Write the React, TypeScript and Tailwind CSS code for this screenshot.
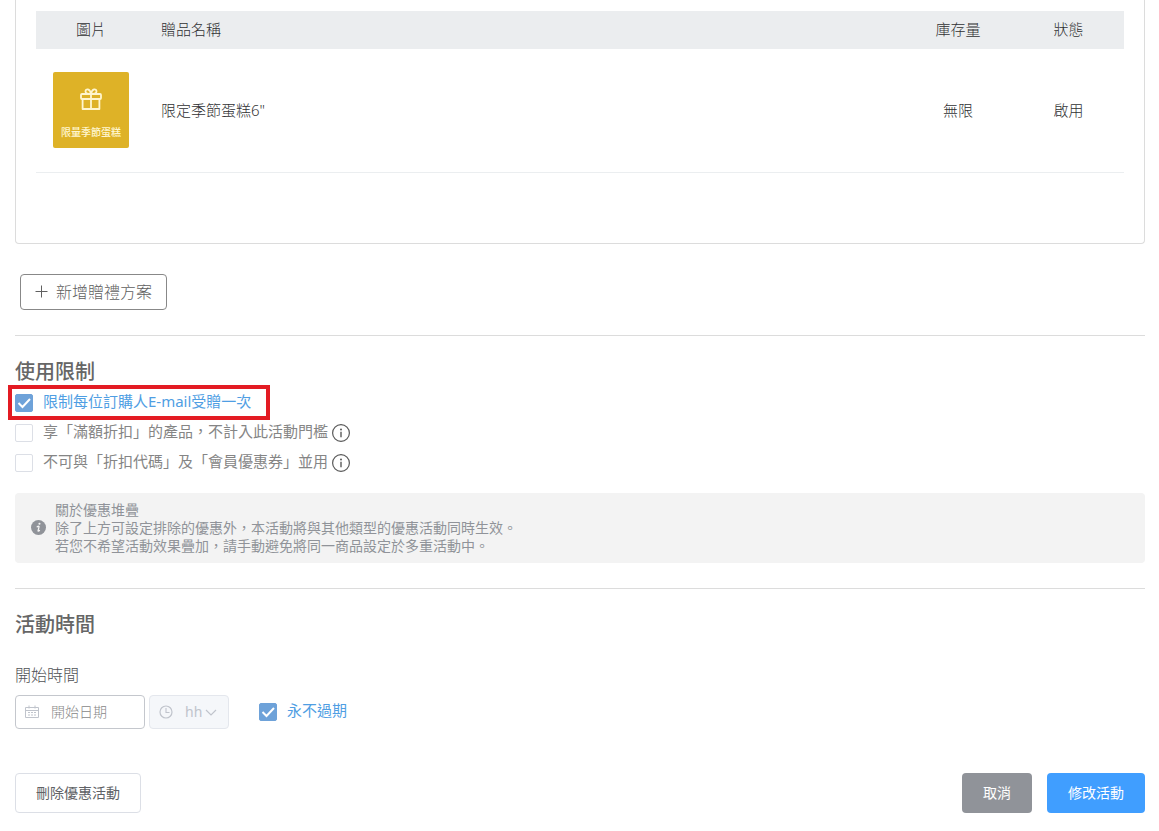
import { useState, type ReactNode } from "react";

const gifts = [
  { id: 1, name: '限定季節蛋糕6"', caption: "限量季節蛋糕", stock: "無限", status: "啟用" },
];

function GiftIcon() {
  return (
    <svg viewBox="0 0 22 22" className="size-[22px]" fill="none" stroke="currentColor" strokeWidth="1.800" strokeLinejoin="round" aria-hidden="true">
      <rect x="1" y="6" width="20" height="5" rx="1" />
      <path d="M2.600 11v10h16.800V11M11 6v15" />
      <path d="M11 6C8.500 6 5.500 5.800 5.500 3.400 5.500.6 10 .2 11 6ZM11 6c2.500 0 5.500-.2 5.500-2.600C16.500.6 12 .2 11 6Z" />
    </svg>
  );
}

function InfoOutlineIcon() {
  return (
    <svg viewBox="0 0 18 18" className="size-[18px]" fill="none" stroke="#5a5a5a" aria-hidden="true">
      <circle cx="9" cy="9" r="8.400" strokeWidth="1.200" />
      <circle cx="9" cy="5.400" r="1" fill="#5a5a5a" stroke="none" />
      <path d="M9 7.800v5.400" strokeWidth="1.400" />
    </svg>
  );
}

function InfoFilledIcon() {
  return (
    <svg viewBox="0 0 14 14" className="size-[15px] shrink-0" aria-hidden="true">
      <circle cx="7" cy="7" r="7" fill="#909399" />
      <circle cx="7.900" cy="3.500" r="1" fill="#f3f3f3" />
      <path d="M5.800 6.300c.8-.7 1.900-.9 1.700.1L6.600 9.900c-.1.800.6.600 1.300-.1" fill="none" stroke="#f3f3f3" strokeWidth="1.200" strokeLinecap="round" />
    </svg>
  );
}

function CalendarIcon() {
  return (
    <svg viewBox="0 0 14 14" className="size-[14px] shrink-0" fill="none" stroke="#c0c4cc" aria-hidden="true">
      <path d="M.5 2.500h13v10H.5zM.5 5.500h13M4 .5v3M10 .5v3" />
      <path d="M3 7.500h8M3 10h8" strokeDasharray="2 1" />
    </svg>
  );
}

function ClockIcon() {
  return (
    <svg viewBox="0 0 14 14" className="size-[14px] shrink-0" fill="none" stroke="#c0c4cc" aria-hidden="true">
      <circle cx="7" cy="7" r="6" strokeWidth="1.200" />
      <path d="M7 3v4.500h3.500" strokeWidth="1.100" />
    </svg>
  );
}

interface CheckboxProps {
  defaultChecked?: boolean;
  children: ReactNode;
}

function Checkbox({ defaultChecked = false, children }: CheckboxProps) {
  const [checked, setChecked] = useState(defaultChecked);

  return (
    <label className="flex cursor-pointer items-center gap-2.5 text-[15px] leading-[26px]">
      <span className="grid shrink-0">
        <input
          type="checkbox"
          checked={checked}
          onChange={(e) => setChecked(e.target.checked)}
          className="peer col-start-1 row-start-1 size-[18px] appearance-none rounded-xs border border-[#dcdfe6] bg-white checked:border-[#6ea2d9] checked:bg-[#6ea2d9]"
        />
        <svg viewBox="0 0 18 18" className="pointer-events-none invisible col-start-1 row-start-1 size-[18px] peer-checked:visible" fill="none" stroke="#fff" strokeWidth="2" aria-hidden="true">
          <path d="M3.500 9l4 4 7.500-8" />
        </svg>
      </span>
      <span className={checked ? "pb-1 text-[#4f9ee3]" : "pb-1 text-[#858585]"}>{children}</span>
    </label>
  );
}

function InfoButton({ label }: { label: string }) {
  return (
    <button type="button" aria-label={label} className="cursor-pointer">
      <InfoOutlineIcon />
    </button>
  );
}

function GiftTable() {
  return (
    <table className="w-full table-fixed text-[15px] leading-5 text-[#303133]">
      <colgroup>
        <col className="w-[110px]" />
        <col />
        <col className="w-[110px]" />
        <col className="w-[111px]" />
      </colgroup>
      <thead>
        <tr className="h-[38px] bg-[#ebedef]">
          <th className="pb-0.5 font-light">圖片</th>
          <th className="px-[15px] pb-0.5 text-left font-light">贈品名稱</th>
          <th className="pb-0.5 font-light">庫存量</th>
          <th className="pb-0.5 font-light">狀態</th>
        </tr>
      </thead>
      <tbody>
        {gifts.map((gift) => (
          <tr key={gift.id} className="h-[123px] border-b border-[#ebeef0] text-center">
            <td>
              <div className="mx-auto flex size-[76px] flex-col items-center justify-end gap-[14px] rounded-xs bg-[#deb227] pb-2 text-[#fff6cf]">
                <GiftIcon />
                <span className="text-[10px] leading-4 font-medium">{gift.caption}</span>
              </div>
            </td>
            <td className="px-[15px] text-left">{gift.name}</td>
            <td>{gift.stock}</td>
            <td>{gift.status}</td>
          </tr>
        ))}
      </tbody>
    </table>
  );
}

export default function App() {
  return (
    <main className="bg-white px-[15px] pb-[18px] font-['Noto_Sans','Noto_Sans_CJK_TC',sans-serif] font-light">
      <div className="-mr-px">
        <section className="rounded-b border border-t-0 border-[#dcdcdc] px-5 pt-[11px] pb-[70px]">
          <GiftTable />
        </section>

        <button type="button" className="mt-[30px] ml-[5px] flex h-9 cursor-pointer items-center gap-2 rounded border border-[#888] px-[14px] text-base text-[#606060]">
          <svg viewBox="0 0 13 13" className="size-[13px]" stroke="currentColor" aria-hidden="true">
            <path d="M6.500 .5v12M.5 6.500h12" />
          </svg>
          新增贈禮方案
        </button>

        <section className="mt-[25px] border-t border-[#dcdcdc] pt-6">
          <h2 className="text-xl leading-6 font-medium text-[#666]">使用限制</h2>
          <ul className="mt-1 font-normal">
            <li className="relative flex h-[30px] items-center">
              <Checkbox defaultChecked>限制每位訂購人E-mail受贈一次</Checkbox>
              <div className="pointer-events-none absolute -top-[3px] -left-[7px] h-[35px] w-[262px] border-4 border-[#e31b23]" />
            </li>
            <li className="flex h-[30px] items-center gap-1">
              <Checkbox>享「滿額折扣」的產品，不計入此活動門檻</Checkbox>
              <InfoButton label="滿額折扣說明" />
            </li>
            <li className="flex h-[30px] items-center gap-1">
              <Checkbox>不可與「折扣代碼」及「會員優惠券」並用</Checkbox>
              <InfoButton label="優惠並用說明" />
            </li>
          </ul>
          <div className="mt-[15px] flex items-center gap-[9px] rounded bg-[#f3f3f3] px-4 py-2 text-sm leading-[18px] font-normal text-[#909399]">
            <InfoFilledIcon />
            <div>
              <p>關於優惠堆疊</p>
              <p>除了上方可設定排除的優惠外，本活動將與其他類型的優惠活動同時生效。</p>
              <p>若您不希望活動效果疊加，請手動避免將同一商品設定於多重活動中。</p>
            </div>
          </div>
        </section>

        <section className="mt-[25px] border-t border-[#dcdcdc] pt-6">
          <h2 className="text-xl leading-6 font-medium text-[#666]">活動時間</h2>
          <label htmlFor="start-date" className="mt-[26px] block text-base leading-6 text-[#505256]">開始時間</label>
          <div className="mt-2 flex items-center">
            <div className="flex h-[34px] w-[130px] items-center gap-3 rounded border border-[#c4c7cd] pl-[9px]">
              <CalendarIcon />
              <input id="start-date" type="text" placeholder="開始日期" className="w-full min-w-0 text-sm text-[#606266] outline-none placeholder:text-[#888]" />
            </div>
            <div className="ml-1 flex h-[34px] w-20 items-center rounded border border-[#e4e7ed] bg-[#f5f7fa] pl-[9px]">
              <ClockIcon />
              <select disabled aria-label="開始時刻" className="ml-3 w-5 appearance-none text-sm font-normal text-[#c0c4cc]">
                <option>hh</option>
              </select>
              <svg viewBox="0 0 12 12" className="size-3" fill="none" stroke="#c0c4cc" strokeWidth="1.200" aria-hidden="true">
                <path d="M1 4l5 5 5-5" />
              </svg>
            </div>
            <div className="ml-[30px] font-normal">
              <Checkbox defaultChecked>永不過期</Checkbox>
            </div>
          </div>
        </section>

        <footer className="mt-11 flex h-10 gap-[15px] text-sm font-normal">
          <button type="button" className="mr-auto cursor-pointer rounded border border-[#dcdfe6] px-5 text-[#606266]">刪除優惠活動</button>
          <button type="button" className="cursor-pointer rounded bg-[#909399] px-[21px] text-white">取消</button>
          <button type="submit" className="cursor-pointer rounded bg-[#409eff] px-[21px] text-white">修改活動</button>
        </footer>
      </div>
    </main>
  );
}
